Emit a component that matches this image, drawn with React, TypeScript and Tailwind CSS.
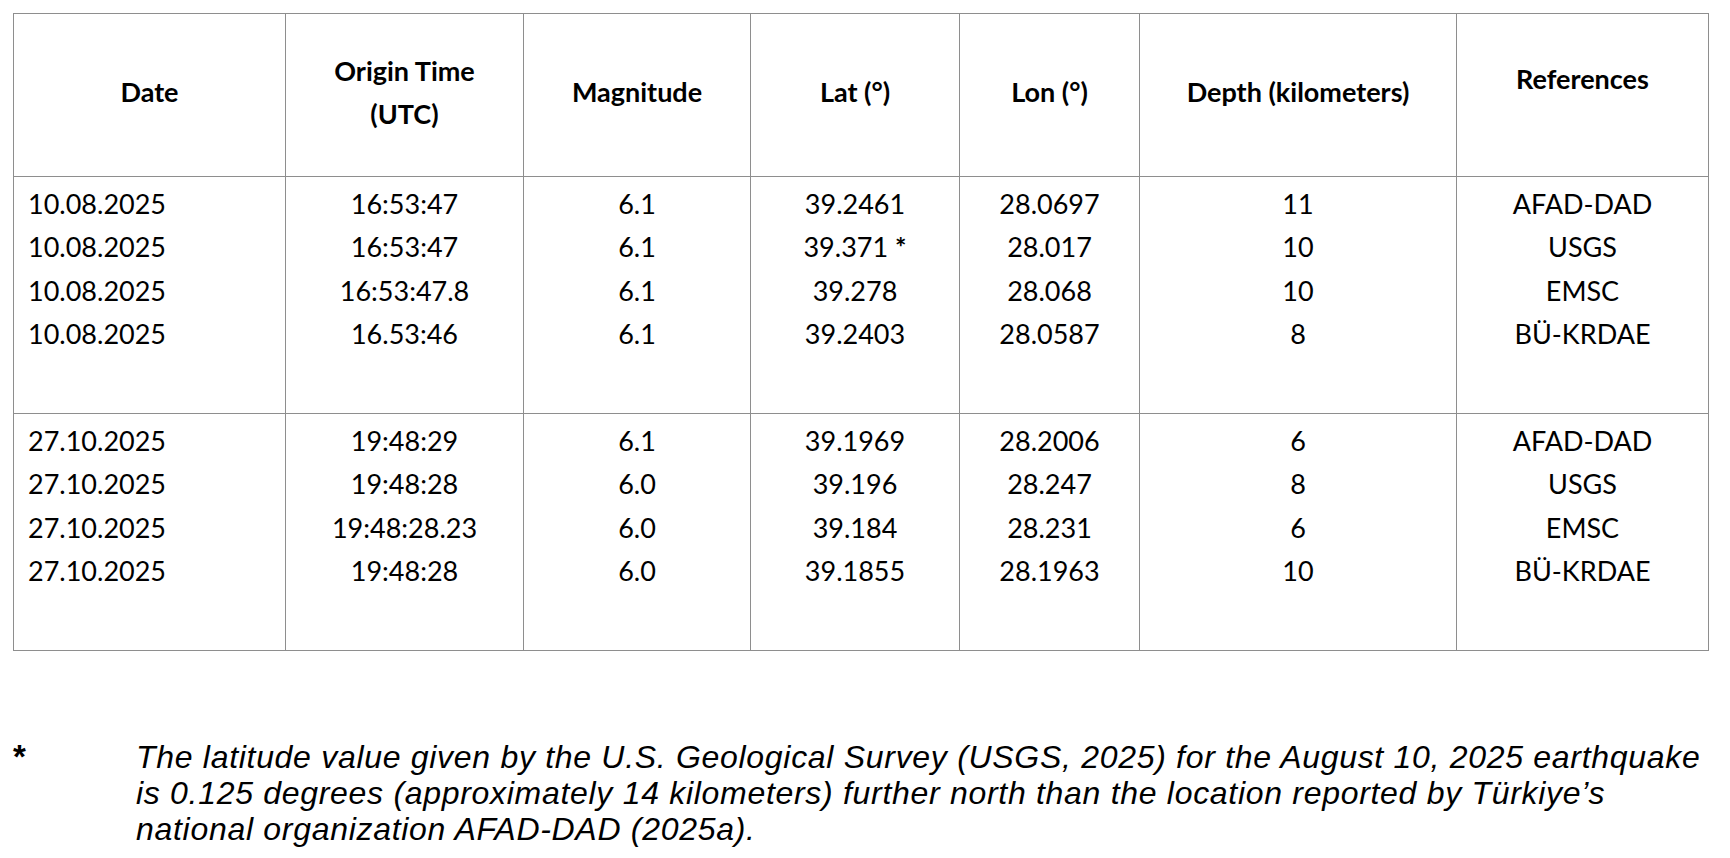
const GROUPS = [
  [
    ['10.08.2025', '16:53:47', '6.1', '39.2461', '28.0697', '11', 'AFAD-DAD'],
    ['10.08.2025', '16:53:47', '6.1', '39.371 *', '28.017', '10', 'USGS'],
    ['10.08.2025', '16:53:47.8', '6.1', '39.278', '28.068', '10', 'EMSC'],
    ['10.08.2025', '16.53:46', '6.1', '39.2403', '28.0587', '8', 'BÜ-KRDAE'],
  ],
  [
    ['27.10.2025', '19:48:29', '6.1', '39.1969', '28.2006', '6', 'AFAD-DAD'],
    ['27.10.2025', '19:48:28', '6.0', '39.196', '28.247', '8', 'USGS'],
    ['27.10.2025', '19:48:28.23', '6.0', '39.184', '28.231', '6', 'EMSC'],
    ['27.10.2025', '19:48:28', '6.0', '39.1855', '28.1963', '10', 'BÜ-KRDAE'],
  ],
];

// column widths measured off the reference grid lines
const COL_WIDTHS = ['w-[272px]', 'w-[238px]', 'w-[227px]', 'w-[209px]', 'w-[180px]', 'w-[317px]', 'w-[252px]'];

// the footnote marker in "39.371 *" is drawn a bit heavier than the digits
function Cell({ text }: { text: string }) {
  if (text.endsWith(' *')) {
    return (
      <>
        {text.slice(0, -1)}
        <span className="font-bold">*</span>
      </>
    );
  }
  return <>{text}</>;
}

export default function App() {
  return (
    <div className="min-h-[858px] bg-white pl-[13px] pt-[13px] text-black">
      <table className="w-[1695px] table-fixed border-collapse font-['Lato',sans-serif] text-[27px] leading-[43px]">
        <colgroup>
          {COL_WIDTHS.map((w) => (
            <col key={w} className={w} />
          ))}
        </colgroup>
        <thead>
          <tr>
            <th className="h-[163px] border border-[#8e8e8e] pb-[8px] align-middle font-bold">Date</th>
            <th className="h-[163px] border border-[#8e8e8e] pb-[6px] align-middle font-bold">
              Origin Time
              <br />
              (UTC)
            </th>
            <th className="h-[163px] border border-[#8e8e8e] pb-[8px] align-middle font-bold">Magnitude</th>
            <th className="h-[163px] border border-[#8e8e8e] pb-[8px] align-middle font-bold">Lat (°)</th>
            <th className="h-[163px] border border-[#8e8e8e] pb-[8px] align-middle font-bold">Lon (°)</th>
            <th className="h-[163px] border border-[#8e8e8e] pb-[8px] align-middle font-bold">Depth (kilometers)</th>
            <th className="h-[163px] border border-[#8e8e8e] pb-[33px] align-middle font-bold">References</th>
          </tr>
        </thead>
        <tbody>
          {GROUPS.map((rows, g) => (
            <tr key={g}>
              {rows[0].map((_, c) => (
                <td
                  key={c}
                  className={
                    c === 0
                      ? 'h-[237px] border border-[#8e8e8e] pl-[14px] pt-[5px] text-left align-top'
                      : 'h-[237px] border border-[#8e8e8e] pt-[5px] text-center align-top'
                  }
                >
                  {rows.map((r, i) => (
                    <div key={i} className="h-[43.3px] whitespace-nowrap">
                      <Cell text={r[c]} />
                    </div>
                  ))}
                </td>
              ))}
            </tr>
          ))}
        </tbody>
      </table>

      <div className="mt-[88px] flex font-['Liberation_Sans',Arial,sans-serif] text-[32px] leading-[36px]">
        <div className="w-[123px] shrink-0 text-[33px] font-bold">*</div>
        <p className="whitespace-nowrap italic tracking-[0.7px]">
          The latitude value given by the U.S. Geological Survey (USGS, 2025) for the August 10, 2025 earthquake
          <br />
          is 0.125 degrees (approximately 14 kilometers) further north than the location reported by Türkiye’s
          <br />
          national organization AFAD-DAD (2025a).
        </p>
      </div>
    </div>
  );
}
